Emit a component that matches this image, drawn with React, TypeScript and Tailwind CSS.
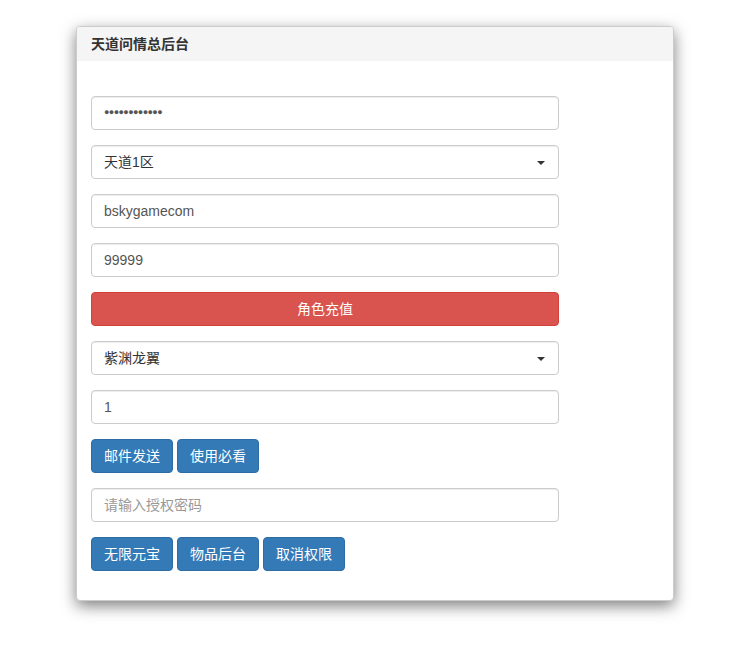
import React from "react";

const font = { fontFamily: '"Liberation Sans", "Noto Sans CJK SC", sans-serif' };

function Caret() {
  return (
    <span className="absolute right-[13px] top-[15px] w-0 h-0 border-l-[4px] border-r-[4px] border-t-[4px] border-l-transparent border-r-transparent border-t-[#333]" />
  );
}

function Field({ value, placeholder, select }: { value?: string; placeholder?: string; select?: boolean }) {
  return (
    <div className="relative h-[34px] w-[468px] rounded-[4px] border border-[#ccc] bg-white shadow-[inset_0_1px_1px_rgba(0,0,0,0.075)] flex items-center px-[12px] text-[14px]">
      {value !== undefined ? (
        <span className={select ? "text-[#333]" : "text-[#555]"}>{value}</span>
      ) : (
        <span className="text-[#999]">{placeholder}</span>
      )}
      {select && <Caret />}
    </div>
  );
}

function Btn({ children }: { children: React.ReactNode }) {
  return (
    <div className="h-[34px] px-[12px] rounded-[4px] border border-[#2e6da4] bg-[#337ab7] text-white text-[14px] flex items-center justify-center">
      {children}
    </div>
  );
}

export default function App() {
  return (
    <div className="min-h-[672px] bg-white pt-[26px] pl-[76px]" style={font}>
      <div className="w-[598px] rounded-[4px] border border-[#ccc] bg-white shadow-[0_5px_15px_rgba(0,0,0,0.5)] overflow-hidden">
        <div className="h-[34px] bg-[#f5f5f5] flex items-center px-[14px] text-[14px] font-bold text-[#333]">
          天道问情总后台
        </div>
        <div className="pt-[35px] pb-[29px] px-[14px] flex flex-col gap-[15px]">
          <div className="relative h-[34px] w-[468px] rounded-[4px] border border-[#ccc] bg-white shadow-[inset_0_1px_1px_rgba(0,0,0,0.075)] flex items-center px-[12px]">
            <span className="text-[#555] text-[9px] tracking-[-0.6px]">●●●●●●●●●●●●</span>
          </div>
          <Field value="天道1区" select />
          <Field value="bskygamecom" />
          <Field value="99999" />
          <div className="h-[34px] w-[468px] rounded-[4px] border border-[#d43f3a] bg-[#d9534f] text-white text-[14px] flex items-center justify-center">
            角色充值
          </div>
          <Field value="紫渊龙翼" select />
          <Field value="1" />
          <div className="flex gap-[4px]">
            <Btn>邮件发送</Btn>
            <Btn>使用必看</Btn>
          </div>
          <Field placeholder="请输入授权密码" />
          <div className="flex gap-[4px]">
            <Btn>无限元宝</Btn>
            <Btn>物品后台</Btn>
            <Btn>取消权限</Btn>
          </div>
        </div>
      </div>
    </div>
  );
}
